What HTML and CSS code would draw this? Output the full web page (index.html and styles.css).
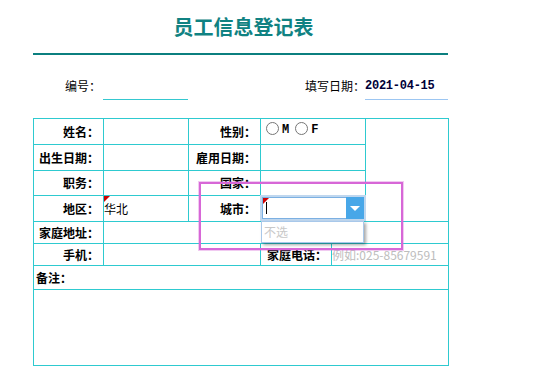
FILE: index.html
```html
<!DOCTYPE html>
<html lang="zh-CN">

<head>
    <meta charset="utf-8" />
    <title>员工信息登记表</title>
    <link rel="stylesheet" href="styles.css">
</head>

<body>
    <div class="sheet">
        <h1 class="title">员工信息登记表</h1>
        <div class="head-row">
            <span class="head-label w-no">编号：</span>
            <span class="head-field w-no-val line-teal"></span>
            <span class="head-label w-date">填写日期：</span>
            <span class="head-field w-date-val line-blue date">2021-04-15</span>
        </div>
        <table class="form">
            <colgroup>
                <col style="width:70px">
                <col style="width:85px">
                <col style="width:72px">
                <col style="width:71px">
                <col style="width:34px">
                <col style="width:83px">
            </colgroup>
            <tr class="h26">
                <th>姓名：</th>
                <td></td>
                <th>性别：</th>
                <td colspan="2" class="sex"><input type="radio" name="sex"><span>M</span><input type="radio" name="sex" class="second"><span>F</span></td>
                <td rowspan="4"></td>
            </tr>
            <tr class="h26">
                <th>出生日期：</th>
                <td></td>
                <th>雇用日期：</th>
                <td colspan="2"></td>
            </tr>
            <tr class="h25">
                <th>职务：</th>
                <td></td>
                <th>国家：</th>
                <td colspan="2"></td>
            </tr>
            <tr class="h26">
                <th>地区：</th>
                <td class="val flag">华北</td>
                <th>城市：</th>
                <td colspan="2" class="city">
                    <div class="combo">
                        <div class="combo-input flag"><span class="caret"></span></div>
                        <div class="combo-btn"><span class="arrow"></span></div>
                        <div class="combo-list">不选</div>
                    </div>
                </td>
            </tr>
            <tr class="h22">
                <th>家庭地址：</th>
                <td colspan="5"></td>
            </tr>
            <tr class="h22">
                <th>手机：</th>
                <td colspan="2"></td>
                <th>家庭电话：</th>
                <td colspan="2" class="val hint">例如:025-85679591</td>
            </tr>
            <tr class="h24">
                <th colspan="6" class="left">备注：</th>
            </tr>
            <tr class="h76">
                <td colspan="6"></td>
            </tr>
        </table>
        <div class="mark"></div>
    </div>
</body>

</html>
```

FILE: styles.css
```css
body {
    margin: 0;
    font-family: "Noto Sans CJK SC", sans-serif;
    font-size: 12px;
    color: #000;
    background-color: #fff;
}
.sheet {
    position: relative;
    width: 415px;
    margin-left: 33px;
}
/* 标题 */
.title {
    margin: 0;
    padding: 13px 0 12px 6px;
    line-height: 28px;
    font-size: 20px;
    font-weight: bold;
    color: #108282;
    text-align: center;
    border-bottom: 2px solid #0b7f7f;
}
/* 编号 + 日期 */
.head-row {
    display: flex;
    margin-top: 22px;
    height: 23px;
}
.head-label {
    box-sizing: border-box;
    text-align: right;
    line-height: 18px;
}
.head-field {
    box-sizing: border-box;
    height: 23px;
    line-height: 18px;
}
.w-no {
    width: 70px;
    padding-right: 2px;
}
.w-no-val {
    width: 85px;
}
.w-date {
    width: 177px;
}
.w-date-val {
    width: 83px;
}
.line-teal {
    border-bottom: 1px solid #35c8d0;
}
.line-blue {
    border-bottom: 1px solid #9cc6f2;
}
.date {
    font-family: "Liberation Mono", monospace;
    font-size: 12px;
    font-weight: bold;
    letter-spacing: -0.25px;
    color: #000038;
}
/* 表格 */
.form {
    width: 415px;
    margin-top: 18px;
    border-collapse: collapse;
    table-layout: fixed;
}
.form th,
.form td {
    padding: 0;
    border: 1px solid #2ecad0;
    font-size: 12px;
    line-height: 16px;
}
.form th {
    padding-right: 4px;
    text-align: right;
    font-weight: bold;
}
.form th.left {
    padding-left: 2px;
    text-align: left;
}
.h22 { height: 22px; }
.h24 { height: 24px; }
.h25 { height: 25px; }
.h26 { height: 26px; }
.h76 { height: 76px; }

.sex {
    vertical-align: top;
    font-family: "Liberation Mono", monospace;
    font-size: 10px;
    font-weight: bold;
}
.sex input {
    vertical-align: top;
    margin: 3px 3px 0 5px;
}
.sex input.second {
    margin-left: 6px;
}
.sex span {
    display: inline-block;
    margin-top: 3px;
}
.val {
    padding-left: 1px;
}
.hint {
    color: #bdbdbd;
}
.flag {
    position: relative;
}
.flag::before {
    content: '';
    position: absolute;
    left: 0;
    top: 0;
    border-top: 6px solid #d00000;
    border-right: 6px solid transparent;
}
/* 下拉框 */
.city {
    position: relative;
}
.combo {
    position: absolute;
    left: -1px;
    top: -1px;
    z-index: 2;
    display: flex;
    box-sizing: border-box;
    width: 106px;
    height: 26px;
    border: 2px solid #bfd7ef;
    background-color: #fff;
}
.combo-input {
    flex: 1;
    border: 1px solid #7cb0e2;
    border-right: none;
}
.caret {
    display: block;
    width: 1px;
    height: 12px;
    margin: 4px 0 0 3px;
    background-color: #000;
}
.combo-btn {
    display: flex;
    align-items: center;
    justify-content: center;
    width: 18px;
    background-color: #48a7e8;
}
.arrow {
    border-top: 5px solid #fff;
    border-left: 5px solid transparent;
    border-right: 5px solid transparent;
}
.combo-list {
    position: absolute;
    left: -1px;
    top: 24px;
    box-sizing: border-box;
    width: 103px;
    height: 22px;
    padding-left: 2px;
    line-height: 20px;
    color: #c8c8c8;
    background-color: #fff;
    border: 1px solid #a8c8ea;
    box-shadow: 2px 2px 3px rgba(0, 0, 0, 0.35);
}
/* 标注框 */
.mark {
    position: absolute;
    left: 166px;
    top: 182px;
    z-index: 5;
    box-sizing: border-box;
    width: 204px;
    height: 68px;
    border: 2px solid #d767d7;
    box-shadow: 0 0 0 1px rgba(215, 103, 215, 0.35);
    pointer-events: none;
}
```
